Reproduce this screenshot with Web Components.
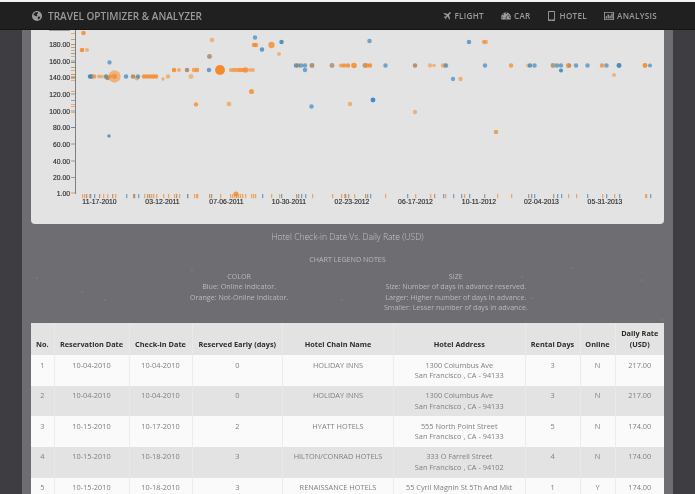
<!DOCTYPE html>
<html>
<head>
<meta charset="utf-8">
<style>
html,body{margin:0;height:494px;overflow:hidden;background:#3e3d42;}
body{font-family:"Open Sans",sans-serif;}
</style>
</head>
<body>
<trip-navbar></trip-navbar>
<report-panel>
  <scatter-chart></scatter-chart>
  <chart-legend>
    <span slot="title">Hotel Check-in Date Vs. Daily Rate (USD)</span>
    <span slot="heading">CHART LEGEND NOTES</span>
    <div slot="color">COLOR<br>Blue: Online Indicator.<br>Orange: Not-Online Indicator.</div>
    <div slot="size">SIZE<br>Size: Number of days in advance reserved.<br>Larger: Higher number of days in advance.<br>Smaller: Lesser number of days in advance.</div>
  </chart-legend>
  <hotel-table></hotel-table>
</report-panel>
<script>
(function () {
  const ORANGE = "#f58a2c";
  const BLUE = "#3f88bd";

  class TripNavbar extends HTMLElement {
    constructor() {
      super();
      this.attachShadow({ mode: "open" });
      this.shadowRoot.innerHTML = `
        <style>
        :host{display:flex;align-items:center;justify-content:space-between;height:30px;
          padding:0 38px 0 32px;background:#202020;box-sizing:border-box;color:#9b9b9b;
          border-top:2px solid #f2f2f2;border-bottom:1px solid #151515;font-family:"Open Sans",sans-serif;filter:blur(.25px);}
        .brand{display:flex;align-items:center;gap:6px;font-size:10px;font-weight:600;color:#9a9a9a;}
        nav{display:flex;gap:17px;font-size:8.1px;font-weight:600;letter-spacing:.3px;}
        a{display:flex;align-items:center;gap:3px;}
        svg{display:block;fill:currentColor;}
        </style>
        <div class="brand">
          <svg width="10" height="10" viewBox="0 0 10 10"><circle cx="5" cy="5" r="5"/><path fill="#202020" d="M3 1.4 5.4 1l.8 1-1.4 1.4.6 1.3-1.2.8L2.6 4.4 1.4 3.6zM6.4 5.4l2 .4-.8 2-1.4.6-.6-1.4z"/></svg>
          <span>TRAVEL OPTIMIZER &amp; ANALYZER</span>
        </div>
        <nav>
          <a><svg width="8" height="8" viewBox="0 0 8 8"><path d="M7.6.4c.4.4.2 1-.2 1.4L6 3.1 7 7 6.3 7.7 4.6 4.5 3.2 5.8l.2 1.2-.5.5-.8-1.5L.6 5.100l.5-.5 1.2.2 1.3-1.4L.4 1.700 1.100 1l3.800 1L6.200.6C6.600.2 7.200 0 7.600.4z"/></svg>FLIGHT</a>
          <a><svg width="10" height="8" viewBox="0 0 10 8"><path fill-rule="evenodd" d="M5 .6a4.900 4.900 0 0 1 4.900 4.900c0 .8-.2 1.500-.5 2.100H.6A4.700 4.700 0 0 1 .1 5.500 4.900 4.900 0 0 1 5 .6zM5 2a.6.6 0 1 0 0-1.100.6.600 0 0 0 0 1.100zM2.300 3.200a.6.6 0 1 0-.1 0zM7.700 3.200a.6.600 0 1 0 .1 0zM1.300 5.900a.6.600 0 1 0 0-1.200.6.600 0 0 0 0 1.200zM8.700 5.900a.6.600 0 1 0 0-1.200.6.600 0 0 0 0 1.200zM4.400 6.800h1.200l-.2-1 1.200-3-.3-.1-1.500 2.900z"/></svg>CAR</a>
          <a style="gap:5px"><svg width="7" height="10" viewBox="0 0 7 10"><path fill-rule="evenodd" d="M.8 0h5.400c.4 0 .8.400.8.800v8.400c0 .4-.4.800-.8.800H.8C.4 10 0 9.600 0 9.200V.8C0 .4.400 0 .8 0zM.9 1v7.500h5.200V1zM3.500 8.800a.4.400 0 1 0 0 .8.400.400 0 0 0 0-.8z"/></svg>HOTEL</a>
          <a style="gap:3px"><svg width="10" height="8" viewBox="0 0 9 8" preserveAspectRatio="none"><path fill-rule="evenodd" d="M0 0h9v8H0zM.8.800v6.400h7.400V.800zM1.500 6.500V4.300h1.200v2.200zM3.200 6.500V2.500h1.200v4zM4.900 6.500V3.500h1.200v3zM6.600 6.500V1.500h1.200v5z"/></svg>ANALYSIS</a>
        </nav>`;
    }
  }

  // panel behind chart and table
  class ReportPanel extends HTMLElement {
    constructor() {
      super();
      this.attachShadow({ mode: "open" });
      const specks = [[15,248],[60,262],[83,270],[170,240],[245,300],[320,270],[395,262],[470,255],[500,247],[510,268],[550,238],[620,250],[640,290],[20,300],[300,312],[200,305]];
      const bg = specks.map(([x, y]) => `radial-gradient(circle at ${x}px ${y}px,#79787d 0 .6px,transparent 1.1px)`).join(",");
      this.shadowRoot.innerHTML = `
        <style>
        :host{display:block;width:651px;margin-left:22px;padding:0 9px;box-sizing:border-box;height:464px;
          background:${bg},#6e6d72;filter:blur(.25px);}
        </style>
        <slot></slot>`;
    }
  }

  const YTICKS = [["180.00",44.5],["160.00",61],["140.00",77.5],["120.00",94],["100.00",111],["80.00",127.5],["60.00",144],["40.00",161],["20.00",177.5]];
  const XTICKS = [["11-17-2010",99.5],["03-12-2011",162.5],["07-06-2011",226.5],["10-30-2011",289],["02-23-2012",352],["06-17-2012",415.5],["10-11-2012",479],["02-04-2013",541.5],["05-31-2013",605]];

  // x, y, radius, colour (o/b/n), opacity - page coordinates
  const POINTS = [
    [83.5,33,2,"o",.85],[82,50,2,"o",.9],[87,50,1.8,"o",.6],
    [90,76.5,2,"b",.9],[91.5,76.5,2,"b",.9],[94,76.5,2,"o",.8],[99,76.5,1.8,"o",.6],[102,76.5,1.8,"o",.5],
    [106,76.5,2,"b",.8],[107.5,78,2,"n",.8],[110,76.5,1.8,"o",.7],
    [114.5,76.5,5.5,"o",.55],[114.5,76.5,2.2,"o",.8],
    [126,76.5,2,"b",.75],[133,76.5,2,"n",.8],[137,78,2.2,"o",.6],[138,76.5,2,"b",.7],
    [144,76.5,2,"o",.85],[147,76.5,2,"o",.85],[150,76.5,2,"o",.85],[153,76.5,2,"o",.85],[156,76.5,2,"o",.85],
    [163,79,1.5,"o",.6],[168,76.5,2,"o",.55],[191,76.5,2.2,"o",.5],
    [174,70,2,"o",.9],[179,70,1.8,"o",.6],[187,70,2,"n",.8],[194,70,2,"o",.7],[197,70,2,"o",.8],[209,70,2,"b",.75],
    [220,70,4.4,"o",1],[231,70,1.8,"o",.7],[234,70,2,"o",.7],[237,70,2,"o",.7],[240,70,2,"o",.8],[243,70,2,"o",.7],[245.5,70,2.5,"o",.85],[250,70,1.8,"o",.6],[253,70,1.8,"o",.6],
    [209.5,56.5,2.2,"n",.75],[212,40,2,"o",.55],[255,37.5,2,"b",.7],[254,45,2,"o",.8],[256,45,2,"o",.8],[262,49.5,2,"b",.8],[271.5,45,2.8,"o",.8],[279,54,1.8,"o",.55],[281.5,42,2,"b",.9],
    [196,104.5,1.9,"o",.8],[229,104,2.2,"o",.55],[251.5,91.5,2.3,"o",.8],[311.5,106.5,2,"b",.7],[350,104,2,"o",.6],[373,100,2.2,"b",.95],[415,112,2,"o",.55],[496,132,2,"o",.75],
    [109.5,62.5,1.9,"b",.7],[109,136,1.6,"b",.8],
    [296,65.5,2,"b",.8],[298,65.5,2,"n",.7],[301,65.5,2,"b",.7],[305,65.5,2,"b",.7],[305,70,2,"b",.7],[312,65.5,2.2,"n",.8],
    [332,65.5,2.2,"n",.7],[341,65.5,1.8,"o",.7],[344,65.5,2,"o",.8],[348,65.5,2,"o",.85],[354,65.5,2.5,"o",.85],[365,65.5,2.2,"n",.7],[367,65.5,2,"o",.8],[370,65.5,2,"o",.85],
    [385.5,65.5,2,"b",.7],[415,65.5,2,"n",.8],[430,65.5,1.9,"o",.55],[434,65.5,1.6,"o",.55],[443,65.5,2,"o",.55],[445,65.5,2,"o",.5],[446,65.5,2,"b",.7],
    [485,65.5,2,"b",.7],[511,65.5,2,"o",.75],[528,65.5,1.8,"o",.5],[530,65.5,2,"b",.8],[534.5,65.5,2,"b",.7],
    [553,65.5,2.2,"n",.7],[557,65.5,2,"b",.7],[561,65.5,2,"b",.7],[561,70.5,1.8,"b",.9],[568.5,65.5,2.3,"o",.75],[569.5,65.5,1.8,"n",.5],[576,65.5,2,"b",.7],[587.5,65.5,2,"b",.7],
    [602,65.5,2,"o",.8],[606.5,65.5,2,"b",.7],[619,65.5,2.2,"b",.95],[645,65.5,2.2,"o",.9],[650,65.5,1.8,"b",.7],[614,75,1.8,"o",.55],
    [369.5,41,2,"b",.7],[469,42,2,"b",.75],[484,42,1.9,"o",.7],[486,42,1.9,"o",.6],[453,79,1.9,"b",.7],[460.5,79,1.9,"o",.6],
    [236,194,2.3,"o",.8]
  ];

  // rug along the x axis, colour by letter
  const RUG_X = "o82 o84 n86 o89 b90 b94 n99 o103 o107 n112 o115 b126 n133 n134 b138 o144 n147 n149 o151 o153 o156 o163 o168 o174 n176 o179 o187 b187 o194 o196 o197 n209 n211 o220 o230 o232 o234 n236 o238 o240 o242 o245 o251 o253 o255 b262 o271 o279 b281 n296 n298 b301 b305 o312 o332 o341 o344 n345 n348 o354 n365 n367 b370 o385 b407 o415 o430 n434 b443 o445 b453 b461 o464 b469 n484 o497 o511 n528 b531 b534 n553 b557 b561 o568 o576 b587 o602 b606 o614 b619 o645 o646 b650".split(" ");
  const RUG_Y = "o33 n39 o44 n47 o50 b53 o56 o62 b62 n67 o70 n74 o76 o78 o80 o91 b100 o104 o106 o112 b127".split(" ");

  class ScatterChart extends HTMLElement {
    constructor() {
      super();
      this.attachShadow({ mode: "open" });
      const tint = (c) => (c === "o" ? ORANGE : c === "b" ? BLUE : "#a07d55");
      // svg viewBox keeps page coordinates, the card starts at (31,30)
      let g = '<rect x="49" y="30" width="21" height="1" fill="#555" opacity=".5"/>';
      YTICKS.forEach(([t, y]) => {
        g += `<text x="70" y="${y + 2.5}" text-anchor="end">${t}</text>`;
        g += `<line x1="71" x2="75" y1="${y}" y2="${y}" stroke="#777" stroke-width=".7"/>`;
      });
      g += `<text x="70" y="195.7" text-anchor="end" font-weight="700">1.00</text><line x1="71" x2="75" y1="193" y2="193" stroke="#e9984f"/>`;
      XTICKS.forEach(([t, x]) => {
        g += `<text x="${x}" y="204.2" text-anchor="middle">${t}</text>`;
      });
      RUG_X.forEach((s) => {
        const c = s[0], x = +s.slice(1);
        g += `<rect x="${x}" y="194" width="1.3" height="4.2" fill="${tint(c)}" opacity=".7"/>`;
      });
      RUG_Y.forEach((s) => {
        const c = s[0], y = +s.slice(1);
        g += `<rect x="71" y="${y}" width="4.5" height="1" fill="${tint(c)}" opacity=".65"/>`;
      });
      POINTS.forEach(([x, y, r, c, o]) => {
        g += `<circle cx="${x}" cy="${y}" r="${r * 1.12}" fill="${tint(c)}" opacity="${o}"/>`;
      });
      this.shadowRoot.innerHTML = `
        <style>
        :host{display:block;height:194px;background:#e3e3e3;border-radius:0 0 4px 4px;overflow:hidden;}
        svg{display:block;}
        text{font:6.8px "Liberation Sans",Arial,sans-serif;fill:#2e2e2e;stroke:#2e2e2e;stroke-width:.15px;}
        </style>
        <svg width="633" height="194" viewBox="31 30 633 194">
          ${g}
          <line x1="75.5" x2="75.5" y1="30" y2="194" stroke="#666" stroke-width=".8"/>
        </svg>`;
    }
  }

  class ChartLegend extends HTMLElement {
    constructor() {
      super();
      this.attachShadow({ mode: "open" });
      this.shadowRoot.innerHTML = `
        <style>
        :host{display:block;height:99px;color:#b9b9bc;font-family:"Open Sans",sans-serif;font-size:7.15px;line-height:10.5px;text-align:center;}
        .title{font-size:8.5px;line-height:14px;padding-top:6px;font-weight:300;color:#c4c4c7;}
        .heading{margin-top:10px;}
        .cols{display:grid;grid-template-columns:216.7px 216.7px;justify-content:center;margin-top:6px;white-space:nowrap;}
        </style>
        <div class="title"><slot name="title"></slot></div>
        <div class="heading"><slot name="heading"></slot></div>
        <div class="cols">
          <div><slot name="color"></slot></div>
          <div><slot name="size"></slot></div>
        </div>`;
    }
  }

  const COLS = [23.5, 75, 63, 90.5, 111, 131.5, 55, 35, 48.5];
  const HEAD = ["No.", "Reservation Date", "Check-in Date", "Reserved Early (days)", "Hotel Chain Name", "Hotel Address", "Rental Days", "Online", "Daily Rate<br>(USD)"];
  const ROWS = [
    ["1", "10-04-2010", "10-04-2010", "0", "HOLIDAY INNS", "1300 Columbus Ave<br>San Francisco , CA - 94133", "3", "N", "217.00"],
    ["2", "10-04-2010", "10-04-2010", "0", "HOLIDAY INNS", "1300 Columbus Ave<br>San Francisco , CA - 94133", "3", "N", "217.00"],
    ["3", "10-15-2010", "10-17-2010", "2", "HYATT HOTELS", "555 North Point Street<br>San Francisco , CA - 94133", "5", "N", "174.00"],
    ["4", "10-15-2010", "10-18-2010", "3", "HILTON/CONRAD HOTELS", "333 O Farrell Street<br>San Francisco , CA - 94102", "4", "N", "174.00"],
    ["5", "10-15-2010", "10-18-2010", "3", "RENAISSANCE HOTELS", "55 Cyril Magnin St 5Th And Mkt", "1", "Y", "174.00"]
  ];

  class HotelTable extends HTMLElement {
    constructor() {
      super();
      this.attachShadow({ mode: "open" });
      let html = '<div class="row head">' + HEAD.map((h) => `<div><span>${h}</span></div>`).join("") + "</div>";
      ROWS.forEach((r, i) => {
        html += `<div class="row ${i % 2 ? "even" : "odd"}">` + r.map((c) => `<div>${c}</div>`).join("") + "</div>";
      });
      this.shadowRoot.innerHTML = `
        <style>
        :host{display:block;font-family:"Open Sans",sans-serif;font-size:7.35px;line-height:10.5px;color:#808080;text-align:center;}
        .row{display:grid;grid-template-columns:${COLS.map((c) => c + "px").join(" ")};height:30.67px;}
        .row>div{padding-top:4.5px;box-sizing:border-box;border-right:1px solid #ececec;}
        .row>div:last-child{border-right:0;}
        .odd{background:#fafafa;}
        .even{background:#e3e3e3;}
        .even>div{border-right-color:#e9e9e9;}
        .head{height:32px;background:#e3e3e3;color:#2e2e2e;font-weight:700;}
        .head>div{display:flex;align-items:flex-end;justify-content:center;padding:0 0 5.75px;border-right-color:#e9e9e9;}
        </style>
        ${html}`;
    }
  }

  customElements.define("trip-navbar", TripNavbar);
  customElements.define("report-panel", ReportPanel);
  customElements.define("scatter-chart", ScatterChart);
  customElements.define("chart-legend", ChartLegend);
  customElements.define("hotel-table", HotelTable);
})();
</script>
</body>
</html>
